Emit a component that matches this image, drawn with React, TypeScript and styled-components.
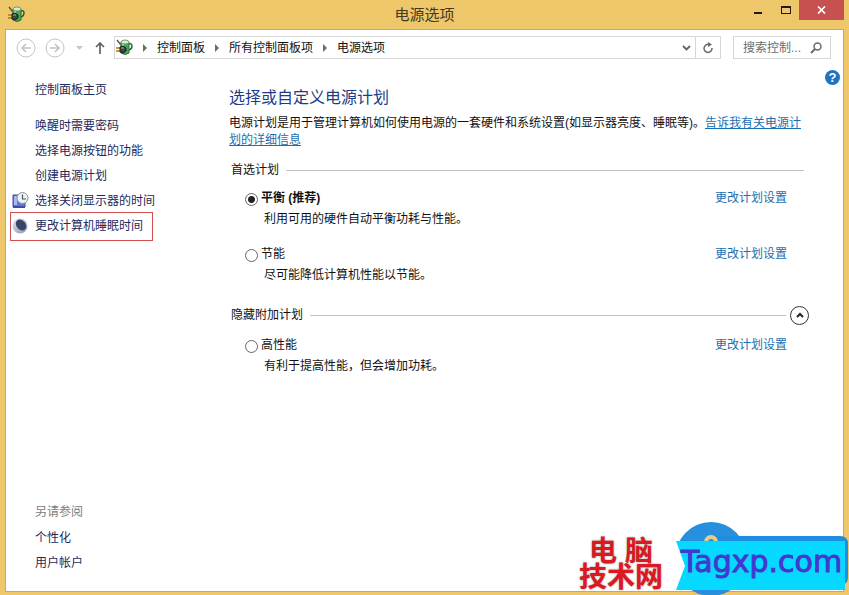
import React, { useState } from "react";
import styled, { createGlobalStyle } from "styled-components";

const GlobalStyle = createGlobalStyle`
  *, *::before, *::after { box-sizing: border-box; }
  body {
    margin: 0;
    background: #eec76b;
    color: #111;
    font-family: "Liberation Sans", "Noto Sans CJK SC", sans-serif;
    font-size: 12px;
    line-height: 18px;
  }
  button, input { font: inherit; color: inherit; }
  svg { display: block; flex: none; }
`;

const Window = styled.div`
  position: relative;
  display: flex;
  flex-direction: column;
  min-height: 100vh;
  padding: 0 5px 3px;
  overflow: hidden;
`;

const TitleBar = styled.header`
  display: grid;
  grid-template-columns: 1fr auto 1fr;
  height: 29px;
`;

const TitleIcon = styled.div`
  padding: 6px 0 0 3px;
`;

const Title = styled.h1`
  margin: 0;
  font-size: 15px;
  font-weight: 400;
  line-height: 29px;
  color: #46381c;
`;

const Controls = styled.div`
  display: flex;
  justify-content: flex-end;
  align-items: flex-start;
`;

const ControlButton = styled.button<{ $close?: boolean }>`
  display: flex;
  justify-content: center;
  align-items: center;
  width: ${(p) => (p.$close ? 45 : 27)}px;
  height: 20px;
  padding: 0;
  border: 0;
  background: ${(p) => (p.$close ? "#c75050" : "transparent")};
`;

const Client = styled.div`
  flex: 1;
  display: flex;
  flex-direction: column;
  border: 1px solid #c9a95e;
  background: #fff;
`;

const Toolbar = styled.nav`
  display: flex;
  align-items: center;
  height: 35px;
  padding: 0 12px 0 10px;
`;

const NavButton = styled.button<{ $width: number }>`
  display: flex;
  justify-content: center;
  align-items: center;
  width: ${(p) => p.$width}px;
  height: 22px;
  padding: 0;
  border: 0;
  background: none;
`;

const AddressBar = styled.div`
  flex: 1;
  display: flex;
  align-items: center;
  height: 23px;
  margin-right: 12px;
  padding-left: 1px;
  border: 1px solid #d6d6d6;
`;

const Crumb = styled.a`
  color: #111;
  text-decoration: none;
  white-space: nowrap;
`;

const Separator = styled.span`
  display: flex;
  justify-content: center;
  width: 24px;
`;

const BarButton = styled.button<{ $divided?: boolean }>`
  display: flex;
  justify-content: center;
  align-items: center;
  width: ${(p) => (p.$divided ? 25 : 18)}px;
  height: 21px;
  margin-left: ${(p) => (p.$divided ? "0" : "auto")};
  padding: 0;
  border: 0;
  border-left: ${(p) => (p.$divided ? "1px solid #d6d6d6" : "0")};
  background: none;
`;

const SearchBox = styled.label`
  display: flex;
  align-items: center;
  width: 98px;
  height: 23px;
  padding: 0 8px 0 9px;
  border: 1px solid #d6d6d6;
`;

const SearchInput = styled.input`
  flex: 1;
  min-width: 0;
  padding: 0;
  border: 0;
  outline: 0;
  background: none;
  &::placeholder { color: #6d6d6d; opacity: 1; }
`;

const Body = styled.div`
  flex: 1;
  display: grid;
  grid-template-columns: 223px 1fr 34px;
`;

const Sidebar = styled.aside`
  display: flex;
  flex-direction: column;
  align-items: flex-start;
  padding: 12px 0 16px 6px;
`;

const TaskList = styled.ul`
  margin: 11px 0 0;
  padding: 0;
  list-style: none;
`;

const TaskItem = styled.li<{ $marked?: boolean }>`
  position: relative;
  width: fit-content;
  &::after {
    content: ${(p) => (p.$marked ? '""' : "none")};
    position: absolute;
    inset: -1px -10px -3px -2px;
    border: 1px solid #d0504f;
    pointer-events: none;
  }
`;

const TaskLink = styled.a`
  display: grid;
  grid-template-columns: 23px auto;
  align-items: center;
  height: 25px;
  color: #1d2a5c;
  text-decoration: none;
  white-space: nowrap;
`;

const TaskText = styled.span`
  grid-column: 2;
`;

const SeeAlso = styled.div`
  margin-top: auto;
`;

const SeeAlsoTitle = styled.h2`
  margin: 0 0 0 23px;
  font-size: 12px;
  font-weight: 400;
  line-height: 25px;
  color: #7c7c7c;
`;

const Main = styled.main`
  padding-top: 22px;
`;

const Heading = styled.h2`
  margin: 0 0 6px;
  font-size: 16px;
  font-weight: 400;
  line-height: 22px;
  color: #1d3b87;
`;

const Intro = styled.p`
  margin: 0 5px 12px 0;
  line-height: 17px;
`;

const TextLink = styled.a<{ $underlined?: boolean }>`
  color: #1a6fb0;
  text-decoration: ${(p) => (p.$underlined ? "underline" : "none")};
`;

const GroupHead = styled.div<{ $inset?: boolean }>`
  display: flex;
  align-items: center;
  gap: 7px;
  height: 18px;
  margin: 0 ${(p) => (p.$inset ? 5 : 0)}px ${(p) => (p.$inset ? 10 : 12)}px 2px;
`;

const GroupTitle = styled.h3`
  margin: 0;
  font-size: 12px;
  font-weight: 400;
`;

const Rule = styled.hr`
  flex: 1;
  height: 1px;
  margin: 0;
  border: 0;
  background: #c2c2c2;
`;

const CollapseButton = styled.button`
  display: flex;
  justify-content: center;
  align-items: center;
  width: 19px;
  height: 19px;
  margin-left: -3px;
  padding: 0;
  border: 1px solid #333;
  border-radius: 50%;
  background: #fff;
`;

const Plan = styled.section`
  display: grid;
  grid-template-columns: 16px 1fr auto;
  row-gap: 3px;
  margin: 0 22px 17px 16px;
`;

const Radio = styled.input`
  appearance: none;
  width: 13px;
  height: 13px;
  margin: 4px 0 0;
  border: 1px solid #666;
  border-radius: 50%;
  background: #fff;
  &:checked {
    background: radial-gradient(circle, #222 0 3px, #fff 4px);
  }
`;

const PlanName = styled.label<{ $bold?: boolean }>`
  font-weight: ${(p) => (p.$bold ? 700 : 400)};
`;

const PlanText = styled.p`
  grid-column: 2 / -1;
  margin: 0 0 0 3px;
`;

const Collapsible = styled.div`
  margin-top: 22px;
`;

const HelpButton = styled.button`
  align-self: start;
  width: 15px;
  height: 15px;
  margin: 5px 0 0 16px;
  padding: 0;
  border: 0;
  border-radius: 50%;
  background: #1e74c0;
  color: #fff;
  font-size: 13px;
  font-weight: 700;
  line-height: 15px;
  text-align: center;
`;

const Watermark = styled.div`
  position: absolute;
  right: 0;
  bottom: 0;
  display: flex;
  align-items: flex-end;
  pointer-events: none;
`;

const WatermarkName = styled.div`
  display: flex;
  flex-direction: column;
  width: 108px;
  padding-bottom: 4px;
  color: #dc1820;
  font-size: 28px;
  font-weight: 700;
  line-height: 26px;
  text-align: center;
  text-shadow: 0 0 2px #8b8b8b;
`;

const WatermarkBanner = styled.div`
  position: relative;
  width: 174px;
  height: 74px;
`;

const WatermarkSite = styled.span`
  position: absolute;
  left: 6px;
  top: 23px;
  color: #4338d0;
  font-family: "DejaVu Sans", sans-serif;
  font-size: 30px;
  line-height: 36px;
  -webkit-text-stroke: 1px #4338d0;
`;

function PowerIcon() {
  return (
    <svg width="17" height="17" viewBox="0 0 17 17" aria-hidden="true">
      <path d="M1 1l4 5" stroke="#4c5548" strokeWidth="1.3" />
      <path d="M13 5q3-1 3 2t-3 4" fill="none" stroke="#245c31" strokeWidth="1.4" />
      <path d="M5 3v11q4 3 8 0V3z" fill="#47a957" stroke="#2f6d3b" />
      <path d="M6 5v3q1 1 2 0V5z" fill="#a7e0a3" />
      <ellipse cx="9" cy="3" rx="4" ry="2" fill="#d7ecd2" stroke="#6f9a72" />
      <path d="M0 9h4M0 12h4" stroke="#b7771c" strokeWidth="1.5" />
      <path d="M4 8l3-1 3 2v3l-3 2-3-1z" fill="#39453d" stroke="#172019" />
      <path d="M5 9h3" stroke="#a5b0a7" />
    </svg>
  );
}

function ArrowCircle({ forward }: { forward?: boolean }) {
  return (
    <svg width="20" height="20" viewBox="0 0 20 20" fill="none" stroke="#c4c4c4" aria-hidden="true">
      <circle cx="10" cy="10" r="9" />
      <path d={forward ? "M5 10h9M10 6l4 4-4 4" : "M15 10H6M10 6l-4 4 4 4"} strokeWidth="1.7" />
    </svg>
  );
}

function CrumbArrow() {
  return (
    <Separator>
      <svg width="4" height="8" viewBox="0 0 4 8" aria-hidden="true">
        <path d="M0 0l4 4-4 4z" fill="#6b6b6b" />
      </svg>
    </Separator>
  );
}

function DisplayIcon() {
  return (
    <svg width="17" height="17" viewBox="0 0 17 17" aria-hidden="true">
      <path d="M1 3h12v12H1z" fill="#6378cf" stroke="#3b4a9c" />
      <path d="M2 4h3v9H2z" fill="#a9b8f2" />
      <path d="M1 15h12" stroke="#3d4da6" strokeWidth="2" />
      <circle cx="10.5" cy="6" r="5.5" fill="#eef2f3" stroke="#8a949b" />
      <path d="M10.5 2.5V7H14" fill="none" stroke="#455964" strokeWidth="1.2" />
    </svg>
  );
}

function MoonIcon() {
  return (
    <svg width="16" height="16" viewBox="0 0 16 16" aria-hidden="true">
      <defs>
        <linearGradient id="moonRim" x1="0" y1="0" x2="1" y2="1">
          <stop offset="0" stopColor="#dfe4ee" />
          <stop offset="1" stopColor="#8795bb" />
        </linearGradient>
      </defs>
      <circle cx="8" cy="8" r="7.5" fill="url(#moonRim)" />
      <ellipse cx="9" cy="7" rx="4.5" ry="6" fill="#3a4361" transform="rotate(-40 9 7)" />
    </svg>
  );
}

const tasks = [
  { text: "唤醒时需要密码" },
  { text: "选择电源按钮的功能" },
  { text: "创建电源计划" },
  { text: "选择关闭显示器的时间", icon: <DisplayIcon /> },
  { text: "更改计算机睡眠时间", icon: <MoonIcon />, marked: true },
];

interface PlanOptionProps {
  id: string;
  name: string;
  text: string;
  bold?: boolean;
  selected: string;
  onSelect: (id: string) => void;
}

function PlanOption({ id, name, text, bold, selected, onSelect }: PlanOptionProps) {
  return (
    <Plan>
      <Radio id={id} type="radio" name="plan" checked={selected === id} onChange={() => onSelect(id)} />
      <PlanName htmlFor={id} $bold={bold}>{name}</PlanName>
      <TextLink href="#settings">更改计划设置</TextLink>
      <PlanText>{text}</PlanText>
    </Plan>
  );
}

export default function App() {
  const [selected, setSelected] = useState("balanced");
  const [open, setOpen] = useState(true);

  return (
    <>
      <GlobalStyle />
      <Window>
        <TitleBar>
          <TitleIcon><PowerIcon /></TitleIcon>
          <Title>电源选项</Title>
          <Controls>
            <ControlButton aria-label="最小化">
              <svg width="9" height="9" viewBox="0 0 9 9"><path d="M0 6h8v2H0z" fill="#201a0e" /></svg>
            </ControlButton>
            <ControlButton aria-label="最大化">
              <svg width="10" height="8" viewBox="0 0 10 8"><path d="M0 0h10v8H0zM1 2v5h8V2z" fill="#201a0e" fillRule="evenodd" /></svg>
            </ControlButton>
            <ControlButton aria-label="关闭" $close>
              <svg width="9" height="8" viewBox="0 0 9 8"><path d="M1 0.5l7 7M8 0.5l-7 7" stroke="#fff" strokeWidth="1.7" /></svg>
            </ControlButton>
          </Controls>
        </TitleBar>

        <Client>
          <Toolbar>
            <NavButton $width={20} aria-label="后退"><ArrowCircle /></NavButton>
            <NavButton $width={37} aria-label="前进"><ArrowCircle forward /></NavButton>
            <NavButton $width={12} aria-label="最近位置">
              <svg width="7" height="4" viewBox="0 0 7 4"><path d="M0 0h7L3.5 4z" fill="#c8c8c8" /></svg>
            </NavButton>
            <NavButton $width={29} aria-label="向上">
              <svg width="10" height="12" viewBox="0 0 10 12"><path d="M5 12V1M1 5l4-4 4 4" fill="none" stroke="#626262" strokeWidth="1.7" /></svg>
            </NavButton>
            <AddressBar>
              <PowerIcon />
              <CrumbArrow />
              <Crumb href="#panel">控制面板</Crumb>
              <CrumbArrow />
              <Crumb href="#items">所有控制面板项</Crumb>
              <CrumbArrow />
              <Crumb href="#power">电源选项</Crumb>
              <BarButton aria-label="以前的位置">
                <svg width="9" height="6" viewBox="0 0 9 6"><path d="M1 1l3.5 3.5L8 1" fill="none" stroke="#626262" strokeWidth="1.8" /></svg>
              </BarButton>
              <BarButton aria-label="刷新" $divided>
                <svg width="12" height="12" viewBox="0 0 12 12">
                  <path d="M7 2.5A4 4 0 1 0 10 6" fill="none" stroke="#6b6b6b" strokeWidth="1.5" />
                  <path d="M6 0l4 2.5L6 5z" fill="#6b6b6b" />
                </svg>
              </BarButton>
            </AddressBar>
            <SearchBox>
              <SearchInput type="text" aria-label="搜索" placeholder="搜索控制..." />
              <svg width="12" height="12" viewBox="0 0 12 12" fill="none" stroke="#6b6b6b">
                <circle cx="7.5" cy="4.5" r="3.5" strokeWidth="1.5" />
                <path d="M5 7L1 11" strokeWidth="2" />
              </svg>
            </SearchBox>
          </Toolbar>

          <Body>
            <Sidebar>
              <TaskLink href="#home"><TaskText>控制面板主页</TaskText></TaskLink>
              <TaskList>
                {tasks.map((task) => (
                  <TaskItem key={task.text} $marked={task.marked}>
                    <TaskLink href="#task">{task.icon}<TaskText>{task.text}</TaskText></TaskLink>
                  </TaskItem>
                ))}
              </TaskList>
              <SeeAlso>
                <SeeAlsoTitle>另请参阅</SeeAlsoTitle>
                <TaskLink href="#personal"><TaskText>个性化</TaskText></TaskLink>
                <TaskLink href="#accounts"><TaskText>用户帐户</TaskText></TaskLink>
              </SeeAlso>
            </Sidebar>

            <Main>
              <Heading>选择或自定义电源计划</Heading>
              <Intro>
                电源计划是用于管理计算机如何使用电源的一套硬件和系统设置(如显示器亮度、睡眠等)。<TextLink href="#more" $underlined>告诉我有关电源计划的详细信息</TextLink>
              </Intro>
              <GroupHead $inset>
                <GroupTitle>首选计划</GroupTitle>
                <Rule />
              </GroupHead>
              <PlanOption id="balanced" name="平衡 (推荐)" bold text="利用可用的硬件自动平衡功耗与性能。" selected={selected} onSelect={setSelected} />
              <PlanOption id="saver" name="节能" text="尽可能降低计算机性能以节能。" selected={selected} onSelect={setSelected} />
              <Collapsible>
                <GroupHead>
                  <GroupTitle>隐藏附加计划</GroupTitle>
                  <Rule />
                  <CollapseButton aria-label="隐藏附加计划" aria-expanded={open} onClick={() => setOpen(!open)}>
                    <svg width="8" height="6" viewBox="0 0 8 6"><path d="M1 5l3-3 3 3" fill="none" stroke="#222" strokeWidth="2" /></svg>
                  </CollapseButton>
                </GroupHead>
                {open && (
                  <PlanOption id="high" name="高性能" text="有利于提高性能，但会增加功耗。" selected={selected} onSelect={setSelected} />
                )}
              </Collapsible>
            </Main>

            <HelpButton aria-label="帮助">?</HelpButton>
          </Body>
        </Client>

        <Watermark>
          <WatermarkName>
            <span>电 脑</span>
            <span>技术网</span>
          </WatermarkName>
          <WatermarkBanner>
            <svg width="174" height="74" viewBox="0 0 174 74" aria-hidden="true">
              <ellipse cx="36" cy="38" rx="36" ry="37" fill="#278fdd" />
              <path d="M36 15h129q8 0 8 8v33q0 8-8 8H36z" fill="#1c8de0" />
              <circle cx="36" cy="21" r="5" fill="none" stroke="#e4cf82" strokeWidth="4" />
              <path d="M0 20h12L10 44 12 69H0z" fill="#fff" />
              <path d="M1 20h169v49H1l9-24z" fill="#06d9ff" />
            </svg>
            <WatermarkSite>Tagxp.com</WatermarkSite>
          </WatermarkBanner>
        </Watermark>
      </Window>
    </>
  );
}
